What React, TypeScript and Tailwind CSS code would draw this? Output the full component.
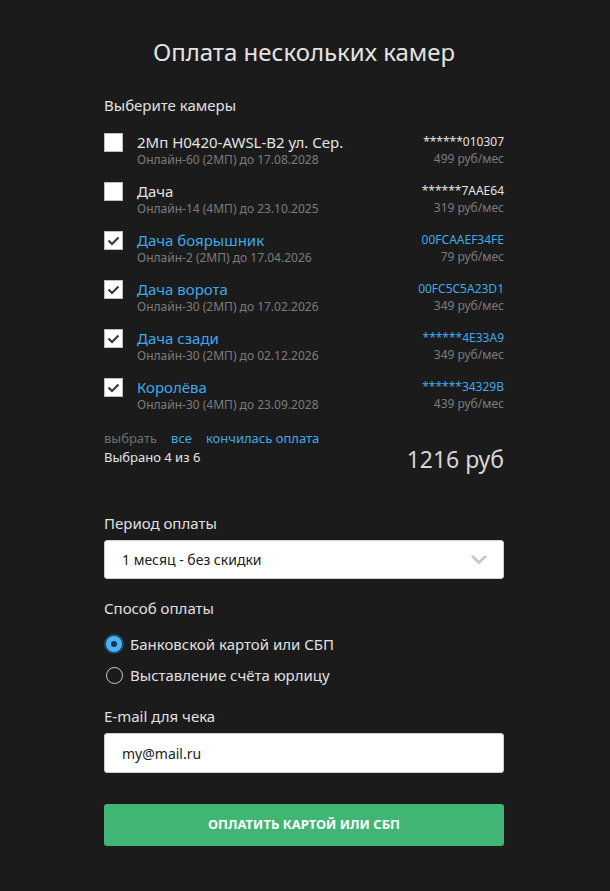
import React from "react";

type Cam = { name: string; sub: string; id: string; price: string; checked: boolean };

const cams: Cam[] = [
  { name: "2Мп H0420-AWSL-B2 ул. Сер.", sub: "Онлайн-60 (2МП) до 17.08.2028", id: "******010307", price: "499 руб/мес", checked: false },
  { name: "Дача", sub: "Онлайн-14 (4МП) до 23.10.2025", id: "******7AAE64", price: "319 руб/мес", checked: false },
  { name: "Дача боярышник", sub: "Онлайн-2 (2МП) до 17.04.2026", id: "00FCAAEF34FE", price: "79 руб/мес", checked: true },
  { name: "Дача ворота", sub: "Онлайн-30 (2МП) до 17.02.2026", id: "00FC5C5A23D1", price: "349 руб/мес", checked: true },
  { name: "Дача сзади", sub: "Онлайн-30 (2МП) до 02.12.2026", id: "******4E33A9", price: "349 руб/мес", checked: true },
  { name: "Королёва", sub: "Онлайн-30 (4МП) до 23.09.2028", id: "******34329B", price: "439 руб/мес", checked: true },
];

function Check({ on }: { on: boolean }) {
  return (
    <div className="w-[19px] h-[19px] bg-white border border-[#bdbdbd] flex items-center justify-center shrink-0">
      {on && (
        <svg width="13" height="10" viewBox="0 0 13 10">
          <path d="M1.5 4.5 L5 8 L11.5 1.5" fill="none" stroke="#3a3a3a" strokeWidth="2.2" />
        </svg>
      )}
    </div>
  );
}

export default function App() {
  return (
    <div
      className="min-h-[891px] w-full bg-[#1b1b1b] text-[#e0e0e0]"
      style={{ fontFamily: '"Noto Sans", "Open Sans", sans-serif' }}
    >
      <div className="w-[400px] ml-[104px] pt-[34px]">
        <h1 className="text-center text-[24px] leading-[36px] text-[#e3e3e3]">Оплата нескольких камер</h1>
        <div className="mt-[25px] text-[15px] leading-[20px] text-[#e0e0e0]">Выберите камеры</div>
        <div className="mt-[17px] flex flex-col">
          {cams.map((c, i) => (
            <div key={i} className="flex items-start h-[49px]">
              <div className="pt-[1px]">
                <Check on={c.checked} />
              </div>
              <div className="ml-[14px] flex-1 min-w-0">
                <div className={`text-[15px] leading-[20px] ${c.checked ? "text-[#3fa9ea]" : "text-[#e3e3e3]"}`}>{c.name}</div>
                <div className="text-[12px] leading-[16px] text-[#7b7b7b]">{c.sub}</div>
              </div>
              <div className="text-right">
                <div className={`text-[12px] leading-[18px] pt-[1px] ${c.checked ? "text-[#3fa9ea]" : "text-[#e3e3e3]"}`}>{c.id}</div>
                <div className="text-[12px] leading-[16px] text-[#7b7b7b]">{c.price}</div>
              </div>
            </div>
          ))}
        </div>
        <div className="mt-[3px] flex gap-[14px] text-[13px] leading-[18px]">
          <span className="text-[#6f6f6f]">выбрать</span>
          <span className="text-[#3fa9ea]">все</span>
          <span className="text-[#3fa9ea]">кончилась оплата</span>
        </div>
        <div className="flex justify-between items-start">
          <span className="text-[13px] leading-[18px] mt-[1px] text-[#e6e6e6]">Выбрано 4 из 6</span>
          <span className="text-[23px] leading-[28px] text-[#d6d6d6] -mt-[2px]">1216 руб</span>
        </div>
        <div className="mt-[40px] text-[15px] leading-[20px]">Период оплаты</div>
        <div className="mt-[7px] h-[39px] bg-white rounded-[3px] border border-[#d0d0d0] flex items-center justify-between pl-[17px] pr-[15px]">
          <span className="text-[14px] text-[#222]">1 месяц - без скидки</span>
          <svg width="18" height="11" viewBox="0 0 18 11">
            <path d="M2 2 L9 8.5 L16 2" fill="none" stroke="#c8c8c8" strokeWidth="3" />
          </svg>
        </div>
        <div className="mt-[19px] text-[15px] leading-[20px]">Способ оплаты</div>
        <div className="mt-[15px] flex items-center h-[22px]">
          <div className="w-[20px] h-[20px] rounded-full bg-[#1d4869] flex items-center justify-center">
            <div className="w-[16px] h-[16px] rounded-full bg-[#4db3f0] flex items-center justify-center">
              <div className="w-[6px] h-[6px] rounded-full bg-[#133a55]" />
            </div>
          </div>
          <span className="ml-[6px] text-[15px]">Банковской картой или СБП</span>
        </div>
        <div className="mt-[9px] flex items-center h-[22px]">
          <div className="w-[20px] h-[20px] flex items-center justify-center">
            <div className="w-[17px] h-[17px] rounded-full border border-[#cfcfcf]" />
          </div>
          <span className="ml-[6px] text-[15px]">Выставление счёта юрлицу</span>
        </div>
        <div className="mt-[20px] text-[15px] leading-[20px]">E-mail для чека</div>
        <div className="mt-[7px] h-[40px] bg-white rounded-[3px] border border-[#d0d0d0] flex items-center pl-[17px]">
          <span className="text-[14px] text-[#222]">my@mail.ru</span>
        </div>
        <button className="mt-[31px] w-full h-[42px] rounded-[3px] bg-[#41b574] text-white text-[13px] font-bold uppercase">
          Оплатить картой или СБП
        </button>
      </div>
    </div>
  );
}
